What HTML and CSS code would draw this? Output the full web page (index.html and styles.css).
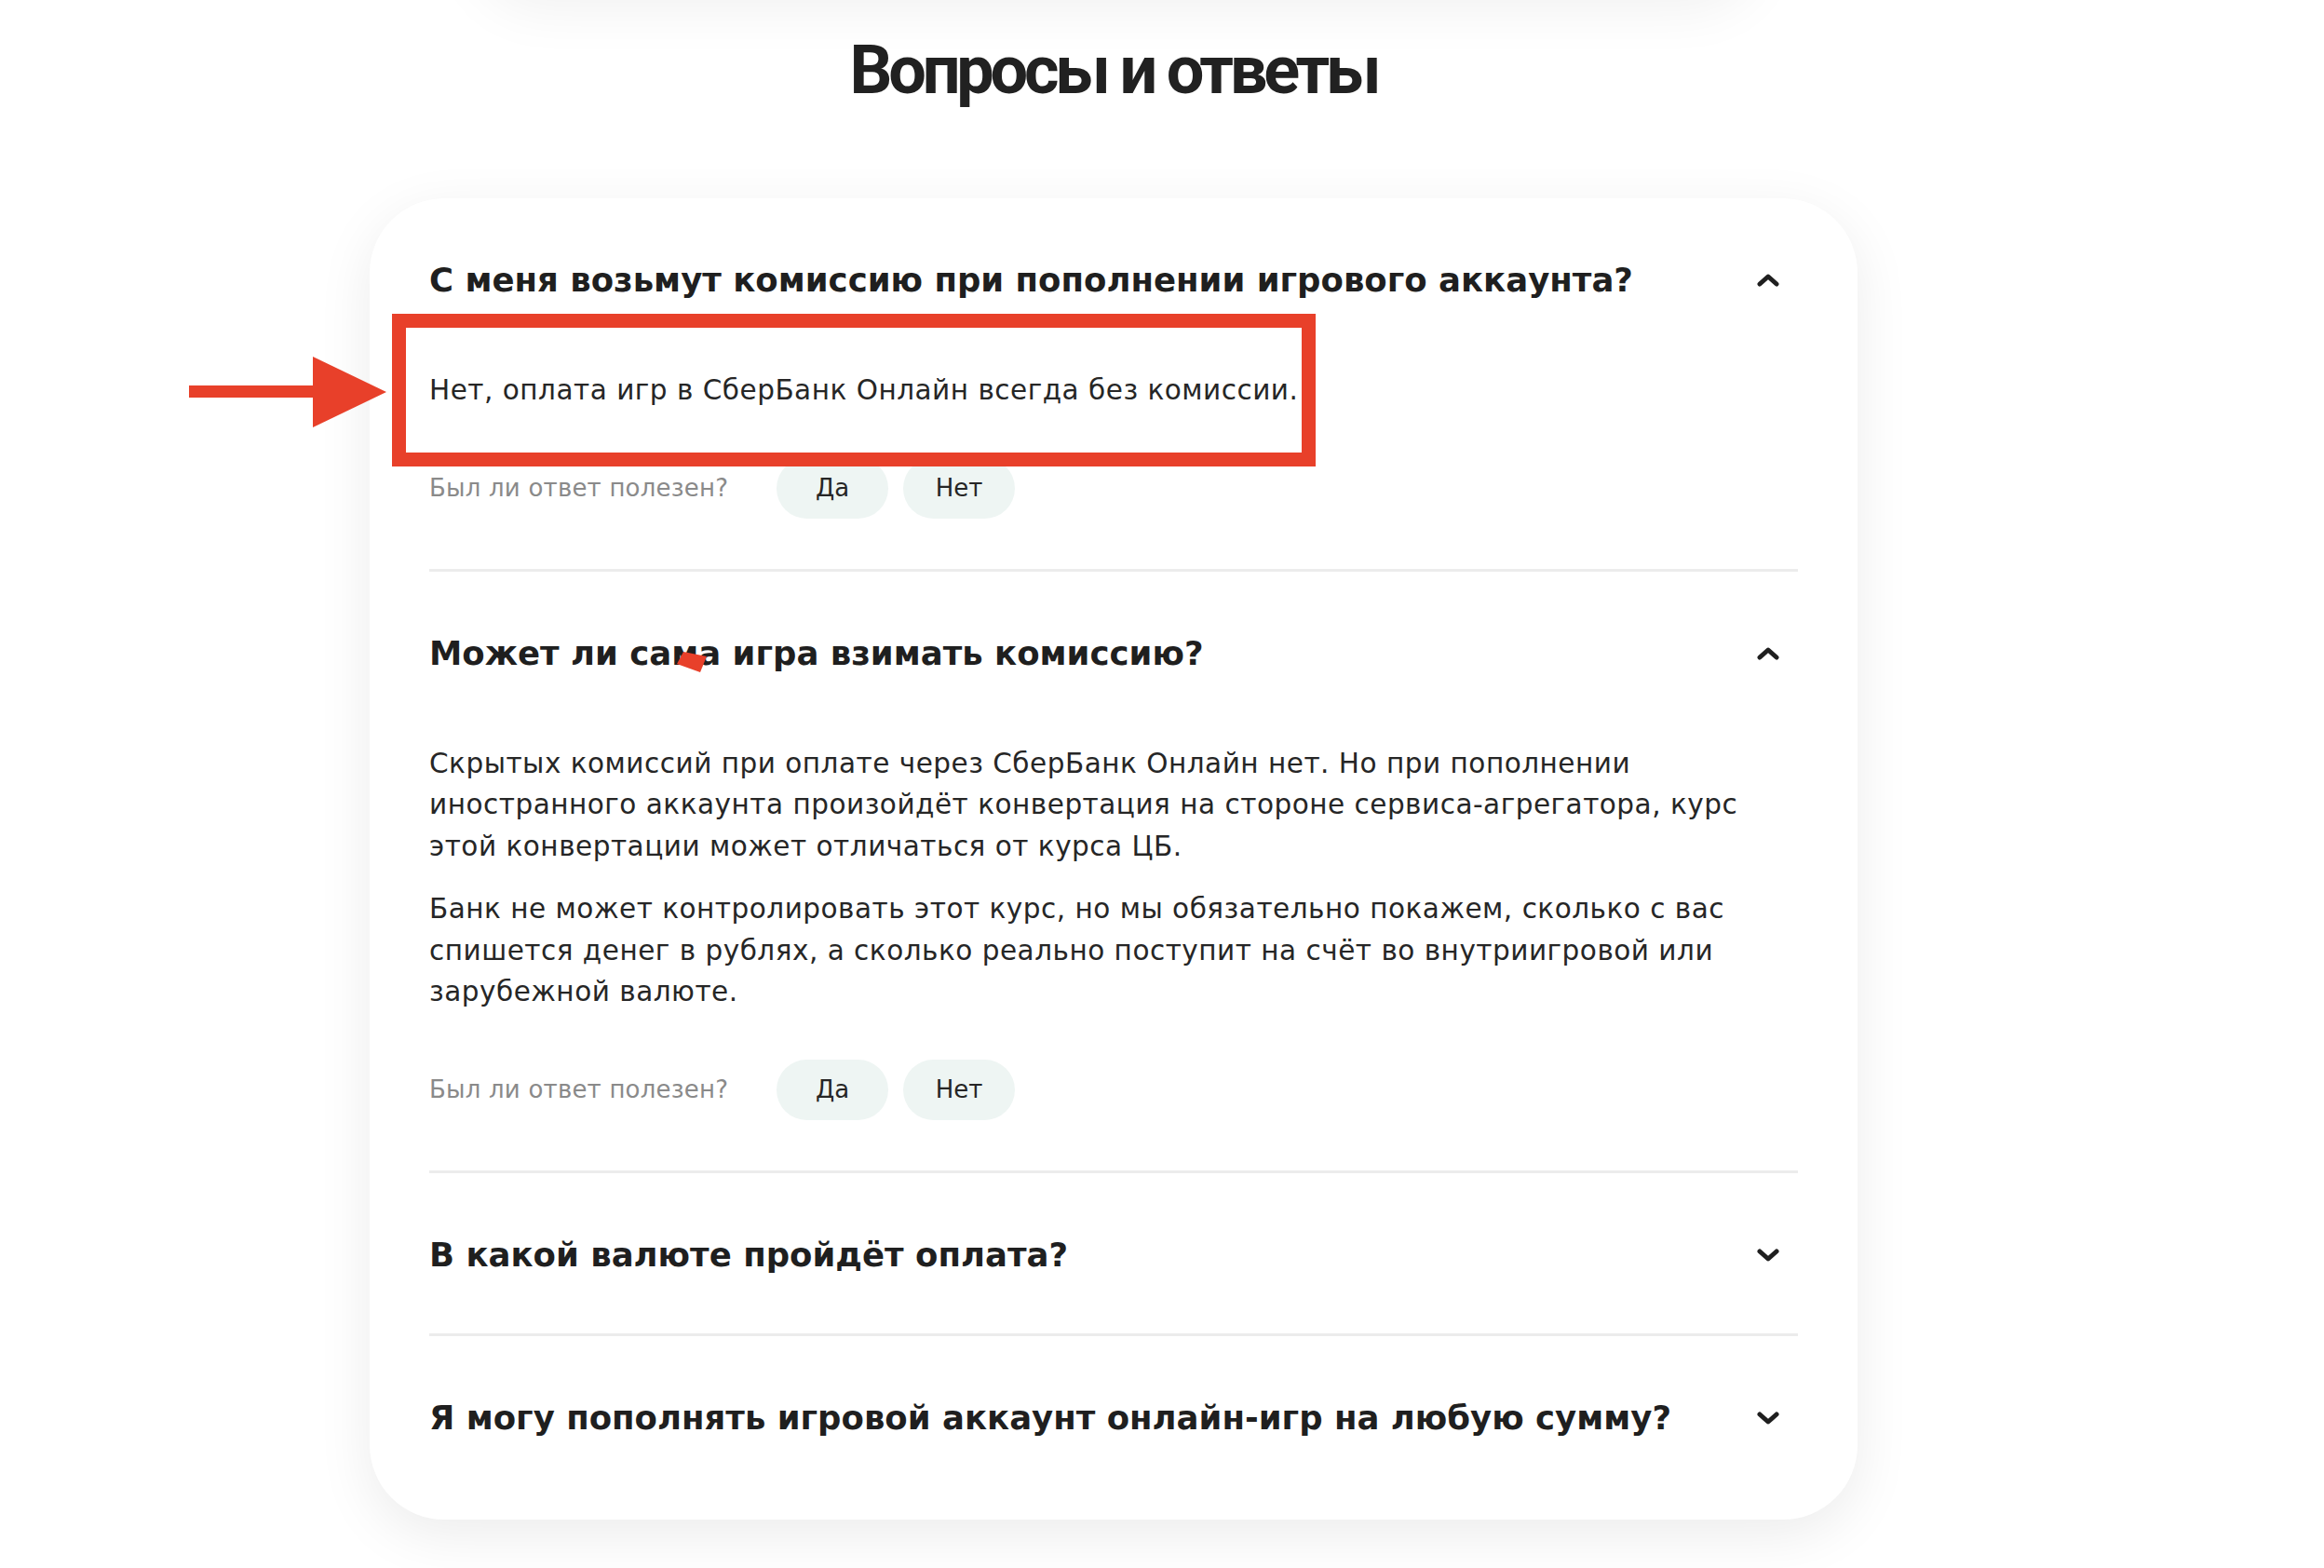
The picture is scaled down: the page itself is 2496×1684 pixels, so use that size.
FILE: index.html
```html
<!DOCTYPE html>
<html lang="ru">
<head>
<meta charset="utf-8">
<title>Вопросы и ответы</title>
<link rel="stylesheet" href="styles.css">
</head>
<body>
<div class="top-shade"></div>
<main class="faq">
  <h1 class="faq-title">Вопросы и ответы</h1>
  <section class="faq-card">
    <div class="faq-item open">
      <div class="faq-head">
        <h2 class="faq-q">С меня возьмут комиссию при пополнении игрового аккаунта?</h2>
        <svg class="chev" viewBox="0 0 24 14" width="24" height="14"><path d="M3 11 L12 3 L21 11" fill="none" stroke="#1f1f1f" stroke-width="5" stroke-linecap="round" stroke-linejoin="round"/></svg>
      </div>
      <div class="faq-a">
        <p>Нет, оплата игр в СберБанк Онлайн всегда без комиссии.</p>
      </div>
      <div class="feedback">
        <span class="fb-label">Был ли ответ полезен?</span>
        <button class="fb-btn">Да</button>
        <button class="fb-btn">Нет</button>
      </div>
    </div>
    <div class="faq-item open">
      <div class="faq-head">
        <h2 class="faq-q">Может ли сама игра взимать комиссию?</h2>
        <svg class="chev" viewBox="0 0 24 14" width="24" height="14"><path d="M3 11 L12 3 L21 11" fill="none" stroke="#1f1f1f" stroke-width="5" stroke-linecap="round" stroke-linejoin="round"/></svg>
      </div>
      <div class="faq-a">
        <p>Скрытых комиссий при оплате через СберБанк Онлайн нет. Но при пополнении иностранного аккаунта произойдёт конвертация на стороне сервиса-агрегатора, курс этой конвертации может отличаться от курса ЦБ.</p>
        <p>Банк не может контролировать этот курс, но мы обязательно покажем, сколько с вас спишется денег в рублях, а сколько реально поступит на счёт во внутриигровой или зарубежной валюте.</p>
      </div>
      <div class="feedback">
        <span class="fb-label">Был ли ответ полезен?</span>
        <button class="fb-btn">Да</button>
        <button class="fb-btn">Нет</button>
      </div>
    </div>
    <div class="faq-item">
      <div class="faq-head">
        <h2 class="faq-q">В какой валюте пройдёт оплата?</h2>
        <svg class="chev" viewBox="0 0 24 14" width="24" height="14"><path d="M3 3 L12 11 L21 3" fill="none" stroke="#1f1f1f" stroke-width="5" stroke-linecap="round" stroke-linejoin="round"/></svg>
      </div>
    </div>
    <div class="faq-item last">
      <div class="faq-head">
        <h2 class="faq-q">Я могу пополнять игровой аккаунт онлайн-игр на любую сумму?</h2>
        <svg class="chev" viewBox="0 0 24 14" width="24" height="14"><path d="M3 3 L12 11 L21 3" fill="none" stroke="#1f1f1f" stroke-width="5" stroke-linecap="round" stroke-linejoin="round"/></svg>
      </div>
    </div>
  </section>
</main>

<div class="anno-box"></div>
<svg class="anno-arrow" viewBox="0 0 212 76" width="212" height="76"><rect x="0" y="31" width="136" height="13" fill="#e8402a"/><polygon points="133,0 212,38 133,76" fill="#e8402a"/></svg>
<svg class="anno-mark" viewBox="0 0 36 26" width="36" height="26"><polygon points="8,2 33,7 26,24 1,15" fill="#e8402a"/></svg>
</body>
</html>
```

FILE: styles.css
```css
html, body {
  margin: 0;
  padding: 0;
  background: #ffffff;
}

body {
  position: relative;
  width: 2496px;
  min-height: 1684px;
  overflow: hidden;
  font-family: "DejaVu Sans", "Noto Sans", sans-serif;
  color: #1f1f1f;
}

.top-shade {
  position: absolute;
  left: 520px;
  top: -120px;
  width: 1360px;
  height: 120px;
  border-radius: 60px;
  box-shadow: 0 0 60px 10px rgba(0, 0, 0, 0.06);
}

.faq {
  width: 1598px;
  margin-left: 397px;
  padding-top: 31px;
  padding-bottom: 40px;
}

.faq-title {
  margin: 0;
  text-align: center;
  font-family: "Roboto", "Liberation Sans", sans-serif;
  font-weight: 700;
  font-size: 72px;
  line-height: 90px;
  letter-spacing: -4.2px;
  color: #212121;
}

.faq-card {
  margin-top: 92px;
  background: #ffffff;
  border-radius: 80px;
  padding: 0 64px 25px;
  box-shadow: 0 16px 60px rgba(0, 0, 0, 0.08);
}

.faq-item {
  border-bottom: 3px solid #ececec;
}

.faq-item.last {
  border-bottom: none;
}

.faq-item.open {
  padding-bottom: 54px;
}

.faq-head {
  display: flex;
  align-items: center;
  justify-content: space-between;
  padding: 63px 0 59px;
}

.faq-q {
  margin: 0;
  font-family: "DejaVu Sans", sans-serif;
  font-weight: 700;
  font-size: 35.5px;
  line-height: 50px;
  color: #1f1f1f;
}

.chev {
  flex: none;
  margin-right: 20px;
}

.faq-a {
  margin-top: 12px;
  padding-right: 40px;
}

.faq-a p {
  margin: 0 0 23px;
  font-size: 29.5px;
  line-height: 44.5px;
  color: #262626;
  letter-spacing: 0.5px;
}

.faq-a p:last-child {
  margin-bottom: 0;
}

.feedback {
  display: flex;
  align-items: center;
  gap: 16px;
  margin-top: 50px;
}

.fb-label {
  font-size: 26px;
  color: #8a8a8a;
  margin-right: 36px;
  letter-spacing: 0.2px;
}

.fb-btn {
  width: 120px;
  height: 65px;
  border: none;
  border-radius: 33px;
  background: #eef5f3;
  font-family: "DejaVu Sans", sans-serif;
  font-size: 26px;
  color: #262626;
  padding: 0;
}

.anno-box {
  position: absolute;
  left: 421px;
  top: 337px;
  width: 962px;
  height: 134px;
  border: 15px solid #e8402a;
}

.anno-arrow {
  position: absolute;
  left: 203px;
  top: 383px;
}

.anno-mark {
  position: absolute;
  left: 726px;
  top: 698px;
}
```
